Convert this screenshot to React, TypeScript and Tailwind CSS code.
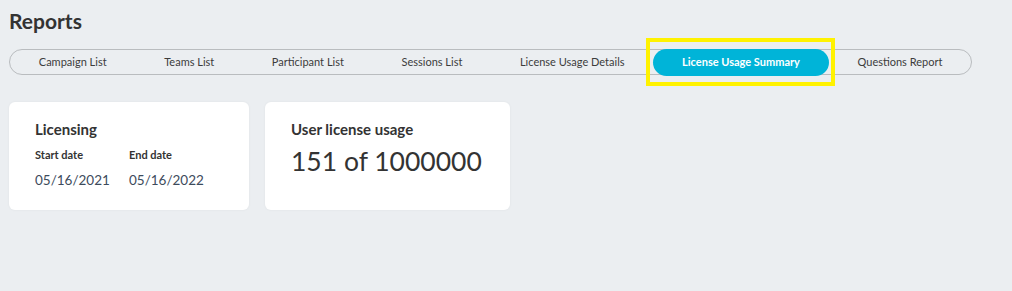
import React from 'react';

const tabs = [
  'Campaign List',
  'Teams List',
  'Participant List',
  'Sessions List',
  'License Usage Details',
  'License Usage Summary',
  'Questions Report',
];

const active = 'License Usage Summary';

export default function App() {
  return (
    <div
      className="min-h-[291px] bg-[#ebeef1] px-[9px] pt-[8px] text-[#333]"
      style={{ fontFamily: '"Lato", "Open Sans", sans-serif' }}
    >
      <h1 className="text-[21px] font-bold leading-[26px] text-[#333]">Reports</h1>

      <div className="mt-[15px] flex w-fit items-center rounded-full border border-[#b9bcbf] h-[26px]">
        {tabs.map((t) =>
          t === active ? (
            <div key={t} className="relative">
              <span className="absolute -left-[7px] -right-[6px] -top-[11px] -bottom-[10px] border-[4px] border-[#fff200]" />
              <div className="flex h-[27px] items-center rounded-full bg-[#00b4d8] px-[28.8px] text-[11px] font-bold text-white">
                {t}
              </div>
            </div>
          ) : (
            <div key={t} className="px-[28.8px] text-[11px] text-[#3c3c3c]">
              {t}
            </div>
          )
        )}
      </div>

      <div className="mt-[27px] flex gap-[16px]">
        <div className="h-[108px] w-[240px] rounded-[6px] bg-white px-[26px] pt-[17px] shadow-[0_0_3px_rgba(0,0,0,0.05)]">
          <h2 className="text-[15px] font-bold leading-[20px]">Licensing</h2>
          <div className="mt-[9px] flex">
            <div className="w-[94px]">
              <div className="text-[11px] font-bold leading-[14px]">Start date</div>
              <div className="mt-[9px] text-[13.5px] leading-[18px] text-[#3d4b5c]">05/16/2021</div>
            </div>
            <div>
              <div className="text-[11px] font-bold leading-[14px]">End date</div>
              <div className="mt-[9px] text-[13.5px] leading-[18px] text-[#3d4b5c]">05/16/2022</div>
            </div>
          </div>
        </div>

        <div className="h-[108px] w-[245px] rounded-[6px] bg-white px-[26px] pt-[17px] shadow-[0_0_3px_rgba(0,0,0,0.05)]">
          <h2 className="text-[15px] font-bold leading-[20px]">User license usage</h2>
          <div className="mt-[6px] text-[26.5px] font-normal leading-[32px] text-[#333]">151 of 1000000</div>
        </div>
      </div>
    </div>
  );
}
